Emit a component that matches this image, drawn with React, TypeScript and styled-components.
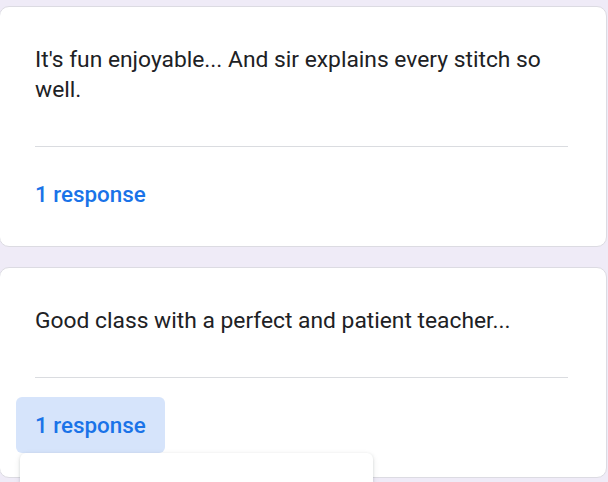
//@ts-nocheck
import styled, { createGlobalStyle } from "styled-components";

const responses = [
  {
    text: "It's fun enjoyable... And sir explains every stitch so well.",
    count: 1,
    active: false,
  },
  {
    text: "Good class with a perfect and patient teacher...",
    count: 1,
    active: true,
  },
];

export default function App() {
  return (
    <>
      <GlobalStyle />
      <Page>
        {responses.map((r, i) => (
          <Card key={i}>
            <AnswerText>{r.text}</AnswerText>
            <Divider />
            <ResponseArea>
              <ResponseButton $active={r.active}>
                {r.count} response{r.count === 1 ? "" : "s"}
              </ResponseButton>
              {r.active && <Popup />}
            </ResponseArea>
          </Card>
        ))}
      </Page>
    </>
  );
}

const GlobalStyle = createGlobalStyle`
  html, body {
    margin: 0;
    padding: 0;
    background: #efebf7;
    overflow: hidden;
  }
  body {
    font-family: Roboto, "Liberation Sans", sans-serif;
  }
`;

const Page = styled.main`
  display: flex;
  flex-direction: column;
  gap: 20px;
  padding: 6px 1px 0 0;
  height: 482px;
  box-sizing: border-box;
  overflow: hidden;
`;

const Card = styled.section`
  background: #ffffff;
  border: 1px solid #dcdbe2;
  border-radius: 10px;
  padding: 38px 38px 24px 35px;
  margin-left: -1px;
`;

const AnswerText = styled.p`
  margin: 0;
  font-size: 22.8px;
  line-height: 30px;
  color: #202124;
`;

const Divider = styled.hr`
  border: none;
  border-top: 1px solid #dadce0;
  margin: 41px 0 19px;
`;

const ResponseArea = styled.div`
  position: relative;
  display: flex;
`;

const ResponseButton = styled.button`
  border: none;
  margin-left: -19px;
  height: 56px;
  padding: 0 19px;
  border-radius: 6px;
  background: ${(p) => (p.$active ? "#d6e4fb" : "transparent")};
  color: #1a73e8;
  font-family: Roboto, "Liberation Sans", sans-serif;
  font-weight: 500;
  font-size: 22.4px;
`;

const Popup = styled.div`
  position: absolute;
  left: -15px;
  top: 56px;
  width: 353px;
  height: 30px;
  background: #ffffff;
  border-radius: 6px 6px 0 0;
  box-shadow: 0 1px 3px rgba(60, 64, 67, 0.18), 0 2px 6px rgba(60, 64, 67, 0.1);
`;
